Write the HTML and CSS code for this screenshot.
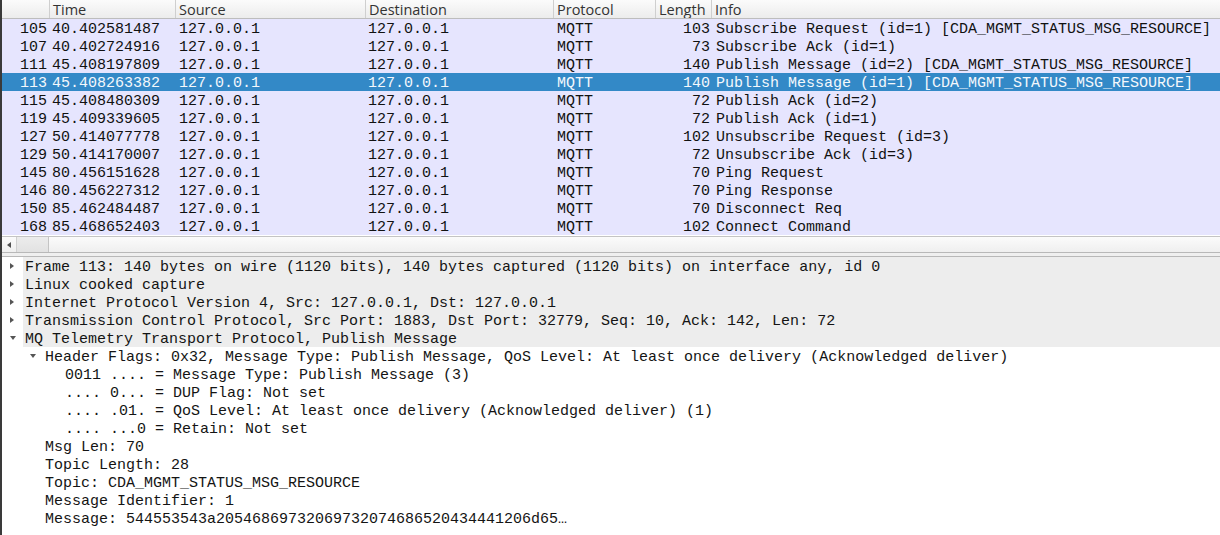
FILE: index.html
```html
<!DOCTYPE html>
<html>
<head>
<meta charset="utf-8">
<link rel="stylesheet" href="styles.css">
</head>
<body>
<div class="window">
  <div class="plist">
    <div class="phead">
      <div class="hc"></div>
      <div class="hc">Time</div>
      <div class="hc">Source</div>
      <div class="hc">Destination</div>
      <div class="hc">Protocol</div>
      <div class="hc">Length</div>
      <div class="hc last">Info</div>
    </div>
    <div class="prow"><span class="num">105</span><span>40.402581487</span><span>127.0.0.1</span><span>127.0.0.1</span><span>MQTT</span><span class="num len">103</span><span class="info">Subscribe Request (id=1) [CDA_MGMT_STATUS_MSG_RESOURCE]</span></div>
    <div class="prow"><span class="num">107</span><span>40.402724916</span><span>127.0.0.1</span><span>127.0.0.1</span><span>MQTT</span><span class="num len">73</span><span class="info">Subscribe Ack (id=1)</span></div>
    <div class="prow"><span class="num">111</span><span>45.408197809</span><span>127.0.0.1</span><span>127.0.0.1</span><span>MQTT</span><span class="num len">140</span><span class="info">Publish Message (id=2) [CDA_MGMT_STATUS_MSG_RESOURCE]</span></div>
    <div class="prow sel"><span class="num">113</span><span>45.408263382</span><span>127.0.0.1</span><span>127.0.0.1</span><span>MQTT</span><span class="num len">140</span><span class="info">Publish Message (id=1) [CDA_MGMT_STATUS_MSG_RESOURCE]</span></div>
    <div class="prow"><span class="num">115</span><span>45.408480309</span><span>127.0.0.1</span><span>127.0.0.1</span><span>MQTT</span><span class="num len">72</span><span class="info">Publish Ack (id=2)</span></div>
    <div class="prow"><span class="num">119</span><span>45.409339605</span><span>127.0.0.1</span><span>127.0.0.1</span><span>MQTT</span><span class="num len">72</span><span class="info">Publish Ack (id=1)</span></div>
    <div class="prow"><span class="num">127</span><span>50.414077778</span><span>127.0.0.1</span><span>127.0.0.1</span><span>MQTT</span><span class="num len">102</span><span class="info">Unsubscribe Request (id=3)</span></div>
    <div class="prow"><span class="num">129</span><span>50.414170007</span><span>127.0.0.1</span><span>127.0.0.1</span><span>MQTT</span><span class="num len">72</span><span class="info">Unsubscribe Ack (id=3)</span></div>
    <div class="prow"><span class="num">145</span><span>80.456151628</span><span>127.0.0.1</span><span>127.0.0.1</span><span>MQTT</span><span class="num len">70</span><span class="info">Ping Request</span></div>
    <div class="prow"><span class="num">146</span><span>80.456227312</span><span>127.0.0.1</span><span>127.0.0.1</span><span>MQTT</span><span class="num len">70</span><span class="info">Ping Response</span></div>
    <div class="prow"><span class="num">150</span><span>85.462484487</span><span>127.0.0.1</span><span>127.0.0.1</span><span>MQTT</span><span class="num len">70</span><span class="info">Disconnect Req</span></div>
    <div class="prow"><span class="num">168</span><span>85.468652403</span><span>127.0.0.1</span><span>127.0.0.1</span><span>MQTT</span><span class="num len">102</span><span class="info">Connect Command</span></div>
  </div>
  <div class="hscroll">
    <div class="sarrow"><span class="tri-left"></span></div>
    <div class="thumb"></div>
  </div>
  <div class="splitter"></div>
  <div class="details">
    <div class="drow top"><span class="arr"><span class="tri-right"></span></span><span class="lbl">Frame 113: 140 bytes on wire (1120 bits), 140 bytes captured (1120 bits) on interface any, id 0</span></div>
    <div class="drow top"><span class="arr"><span class="tri-right"></span></span><span class="lbl">Linux cooked capture</span></div>
    <div class="drow top"><span class="arr"><span class="tri-right"></span></span><span class="lbl">Internet Protocol Version 4, Src: 127.0.0.1, Dst: 127.0.0.1</span></div>
    <div class="drow top"><span class="arr"><span class="tri-right"></span></span><span class="lbl">Transmission Control Protocol, Src Port: 1883, Dst Port: 32779, Seq: 10, Ack: 142, Len: 72</span></div>
    <div class="drow top"><span class="arr"><span class="tri-down"></span></span><span class="lbl">MQ Telemetry Transport Protocol, Publish Message</span></div>
    <div class="drow l1"><span class="arr"><span class="tri-down"></span></span><span class="lbl">Header Flags: 0x32, Message Type: Publish Message, QoS Level: At least once delivery (Acknowledged deliver)</span></div>
    <div class="drow l2"><span class="arr"></span><span class="lbl">0011 .... = Message Type: Publish Message (3)</span></div>
    <div class="drow l2"><span class="arr"></span><span class="lbl">.... 0... = DUP Flag: Not set</span></div>
    <div class="drow l2"><span class="arr"></span><span class="lbl">.... .01. = QoS Level: At least once delivery (Acknowledged deliver) (1)</span></div>
    <div class="drow l2"><span class="arr"></span><span class="lbl">.... ...0 = Retain: Not set</span></div>
    <div class="drow l1"><span class="arr"></span><span class="lbl">Msg Len: 70</span></div>
    <div class="drow l1"><span class="arr"></span><span class="lbl">Topic Length: 28</span></div>
    <div class="drow l1"><span class="arr"></span><span class="lbl">Topic: CDA_MGMT_STATUS_MSG_RESOURCE</span></div>
    <div class="drow l1"><span class="arr"></span><span class="lbl">Message Identifier: 1</span></div>
    <div class="drow l1"><span class="arr"></span><span class="lbl">Message: 544553543a20546869732069732074686520434441206d65…</span></div>
  </div>
</div>
</body>
</html>
```

FILE: styles.css
```css
html, body {
  margin: 0;
  padding: 0;
  background: #ffffff;
  overflow: hidden;
}

.window {
  width: 1218px;
  height: 535px;
  border-left: 2px solid #3a3a3a;
  display: flex;
  flex-direction: column;
  overflow: hidden;
}

.plist {
  background: #ffffff;
}

.phead,
.prow {
  display: grid;
  grid-template-columns: 48px 126px 190px 188px 102px 56px 1fr;
}

.phead {
  height: 18px;
  border-bottom: 1px solid #bdbdbd;
  background: linear-gradient(#fbfbfb, #ececec);
  font-family: "Open Sans", "Noto Sans", sans-serif;
  font-size: 14.5px;
  color: #333333;
}

.hc {
  line-height: 19px;
  padding-left: 3px;
  border-right: 1px solid #cfcfcf;
  white-space: nowrap;
  overflow: hidden;
}

.hc.last {
  border-right: none;
}

.prow {
  height: 18px;
  line-height: 22px;
  overflow: hidden;
  background: #e6e5fe;
  font-family: "Liberation Mono", monospace;
  font-size: 15px;
  color: #111111;
  white-space: nowrap;
}

.prow span {
  padding-left: 2px;
  overflow: hidden;
}

.prow span:nth-child(3),
.prow span:nth-child(5) {
  padding-left: 3px;
}

.prow .num {
  text-align: right;
  padding-left: 0;
  padding-right: 3px;
}

.prow .len {
  padding-right: 2px;
}

.prow .info {
  padding-left: 4px;
  overflow: hidden;
}

.prow.sel {
  background: #3389c7;
  color: #f4f8fc;
}

.hscroll {
  height: 15px;
  border-top: 1px solid #c4c4c4;
  border-bottom: 1px solid #b8b8b8;
  background: linear-gradient(#fbfbfb, #efefef);
  display: flex;
  align-items: stretch;
  margin-top: 1px;
}

.sarrow {
  width: 14px;
  display: flex;
  align-items: center;
  justify-content: center;
}

.tri-left {
  width: 0;
  height: 0;
  border-top: 3.5px solid transparent;
  border-bottom: 3.5px solid transparent;
  border-right: 4px solid #505050;
}

.thumb {
  width: 31px;
  background: linear-gradient(#ececec, #e2e2e2);
  border-left: 1px solid #d0d0d0;
  border-right: 1px solid #c4c4c4;
}

.splitter {
  height: 3px;
  background: #efefef;
  border-bottom: 1px solid #b8b8b8;
}

.details {
  flex: 1;
  background: #ffffff;
  font-family: "Liberation Mono", monospace;
  font-size: 15px;
  color: #141414;
}

.drow {
  height: 18px;
  display: flex;
  white-space: nowrap;
  overflow: hidden;
}

.drow.l1 {
  padding-left: 20px;
}

.drow.l2 {
  padding-left: 40px;
}

.arr {
  width: 21px;
  height: 18px;
  flex: none;
  display: flex;
  align-items: center;
  justify-content: center;
  padding-right: 2px;
  box-sizing: border-box;
}

.lbl {
  flex: 1;
  height: 18px;
  line-height: 22px;
  padding-left: 2px;
}

.drow.top .lbl {
  background: #ededed;
}

.tri-right {
  width: 0;
  height: 0;
  border-top: 3.5px solid transparent;
  border-bottom: 3.5px solid transparent;
  border-left: 4px solid #555555;
  margin-left: 1px;
}

.tri-down {
  width: 0;
  height: 0;
  border-left: 3.5px solid transparent;
  border-right: 3.5px solid transparent;
  border-top: 4px solid #555555;
  margin-left: 3px;
}
```
